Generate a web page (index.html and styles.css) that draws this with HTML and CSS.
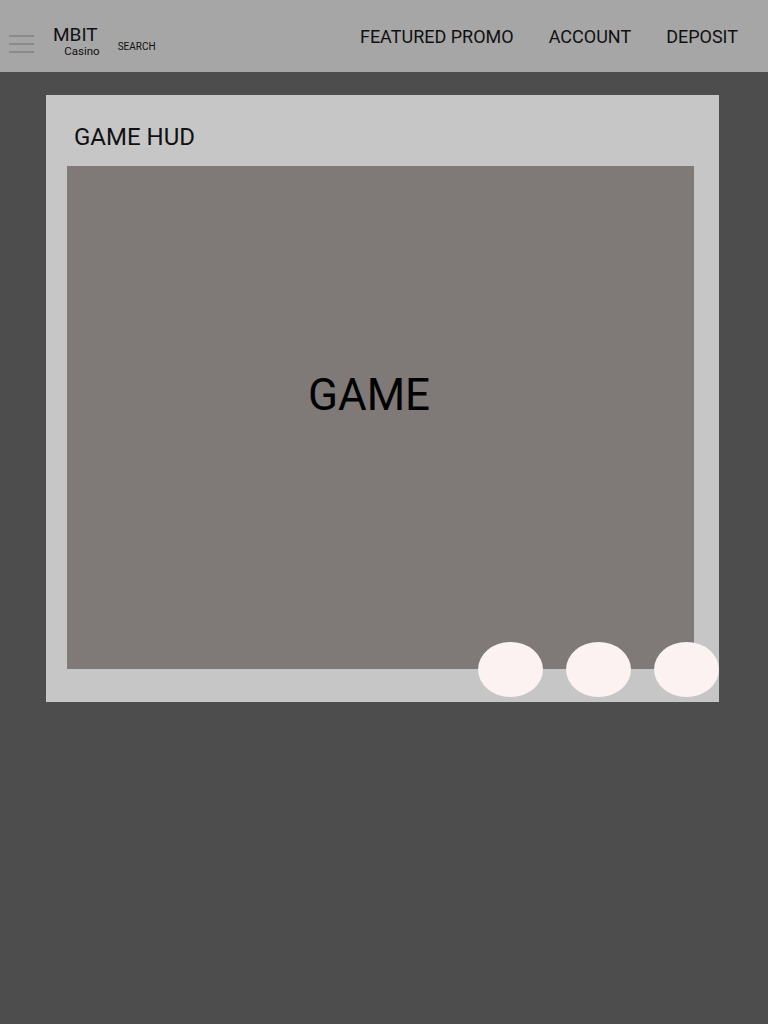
FILE: index.html
```html
<!DOCTYPE html>
<html>
<head>
<meta charset="utf-8">
<link rel="stylesheet" href="styles.css">
</head>
<body>
<header class="topbar">
  <div class="brand-group">
    <div class="burger"><span></span><span></span><span></span></div>
    <div class="brand">
      <div class="brand-name">MBIT</div>
      <div class="brand-sub">Casino</div>
    </div>
    <div class="search">SEARCH</div>
  </div>
  <nav class="nav">
    <a>FEATURED PROMO</a>
    <a>ACCOUNT</a>
    <a>DEPOSIT</a>
  </nav>
</header>
<main class="main">
  <section class="hud">
    <h1 class="hud-title">GAME HUD</h1>
    <div class="game"><span class="game-label">GAME</span></div>
    <div class="controls">
      <span class="dot"></span><span class="dot"></span><span class="dot"></span>
    </div>
  </section>
</main>
</body>
</html>
```

FILE: styles.css
```css
* { box-sizing: border-box; }
html, body { margin: 0; padding: 0; }
body {
  background: #4d4d4d;
  font-family: Roboto, "Liberation Sans", sans-serif;
  color: #111;
  min-height: 1024px;
}
.topbar {
  height: 72px;
  background: #a6a6a6;
  display: flex;
  align-items: flex-start;
  justify-content: space-between;
}
.brand-group {
  display: flex;
  align-items: flex-start;
  padding-left: 9px;
}
.burger {
  width: 25px;
  margin-top: 35px;
  display: flex;
  flex-direction: column;
  gap: 6.5px;
}
.burger span {
  display: block;
  height: 1.5px;
  background: #8a8a8a;
}
.brand {
  margin-left: 19px;
  margin-top: 24px;
  display: flex;
  flex-direction: column;
  align-items: flex-end;
}
.brand-name {
  font-size: 19px;
  line-height: 22px;
  margin-right: 1px;
}
.brand-sub {
  font-size: 11.5px;
  line-height: 12px;
  margin-right: -1px;
  margin-top: -1px;
}
.search {
  font-size: 10px;
  line-height: 12px;
  margin-left: 19px;
  margin-top: 41px;
}
.nav {
  display: flex;
  gap: 35px;
  padding-right: 30px;
  margin-top: 26px;
}
.nav a {
  font-size: 18px;
  line-height: 21px;
  color: #111;
}
.main {
  padding: 23px 49px 0 46px;
}
.hud {
  position: relative;
  background: #c6c6c6;
  height: 607px;
  padding: 20px 25px 0 21px;
}
.hud-title {
  margin: 0 0 0 7px;
  font-weight: 400;
  font-size: 24px;
  line-height: 44px;
  height: 51px;
}
.game {
  background: #7f7a77;
  height: 503px;
  position: relative;
}
.game-label {
  position: absolute;
  left: 241px;
  top: 204px;
  font-size: 44px;
  line-height: 50px;
  color: #000;
}
.controls {
  position: absolute;
  right: 0;
  top: 547px;
  display: flex;
  gap: 23px;
}
.dot {
  width: 65px;
  height: 55px;
  border-radius: 50%;
  background: #fbf2f1;
}
```
